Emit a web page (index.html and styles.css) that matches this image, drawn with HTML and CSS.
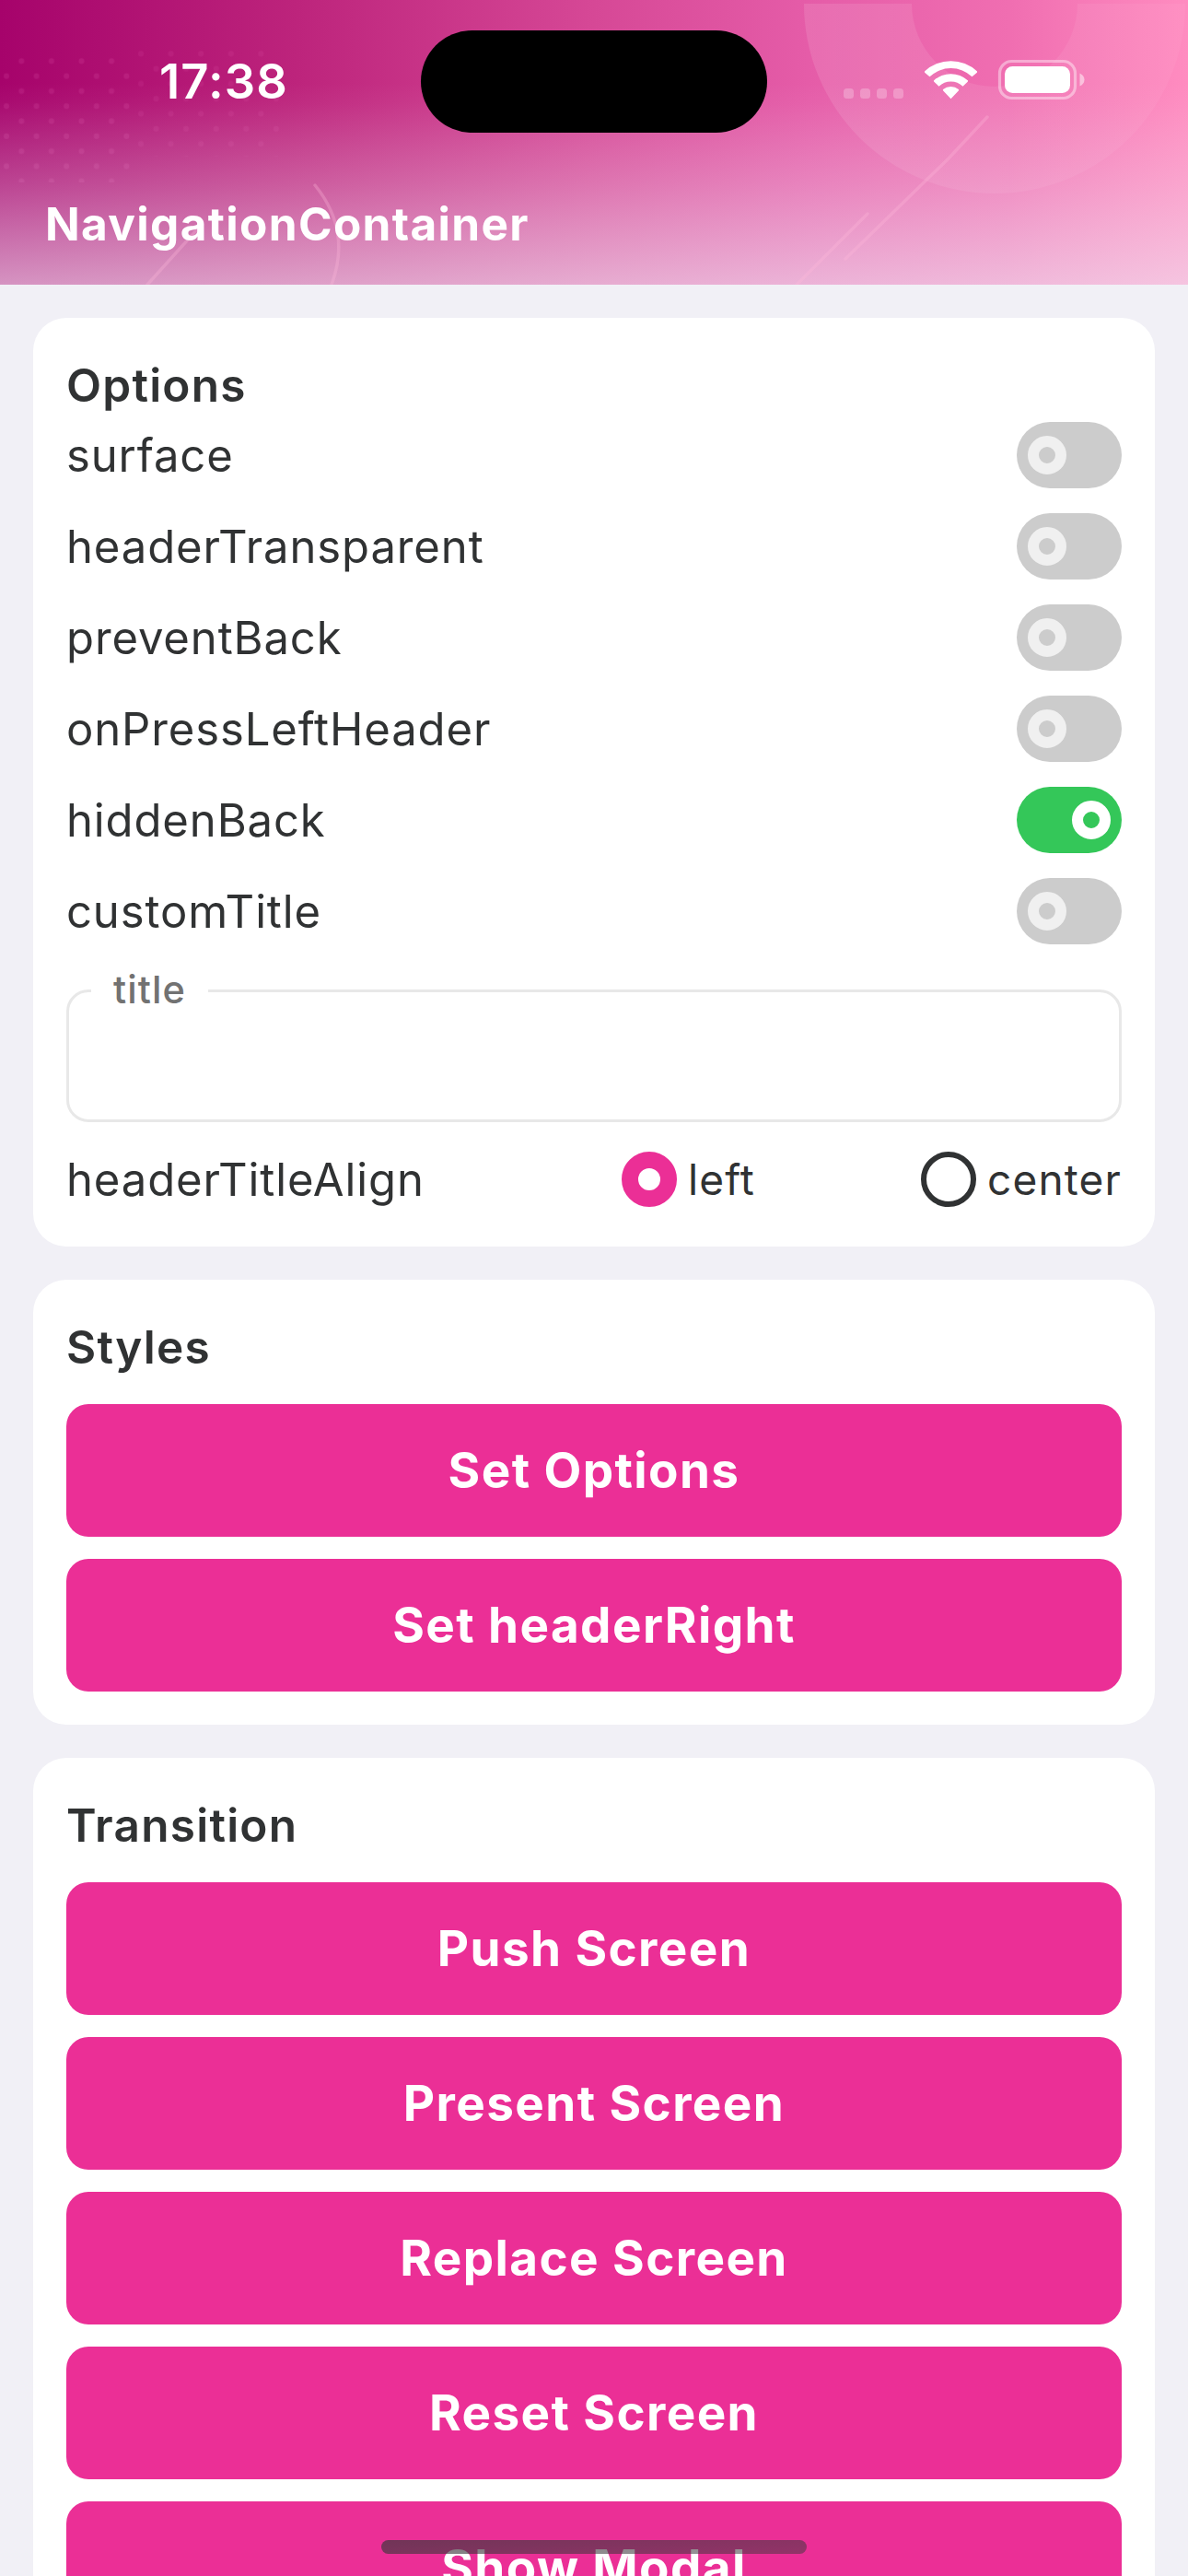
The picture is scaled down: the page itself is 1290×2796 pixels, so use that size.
FILE: index.html
```
<!DOCTYPE html>
<html lang="en">
<head>
<meta charset="utf-8">
<title>NavigationContainer</title>
<link rel="stylesheet" href="styles.css">
</head>
<body>
<div class="screen">
  <header class="header">
    <svg class="header-art" viewBox="0 0 1290 309" aria-hidden="true">
      <defs>
        <linearGradient id="base" x1="0" y1="0" x2="1" y2="0">
          <stop offset="0" stop-color="#a6036b"/>
          <stop offset="0.25" stop-color="#bd247c"/>
          <stop offset="0.5" stop-color="#d64896"/>
          <stop offset="0.68" stop-color="#e55ca8"/>
          <stop offset="0.85" stop-color="#f06eb1"/>
          <stop offset="1" stop-color="#ff8cc0"/>
        </linearGradient>
        <linearGradient id="fade" gradientUnits="userSpaceOnUse" x1="645" y1="90" x2="645" y2="309">
          <stop offset="0" stop-color="#f0e4f2" stop-opacity="0"/>
          <stop offset="0.1" stop-color="#f0e4f2" stop-opacity="0.04"/>
          <stop offset="0.5" stop-color="#f0e4f2" stop-opacity="0.29"/>
          <stop offset="1" stop-color="#f0e4f2" stop-opacity="0.64"/>
        </linearGradient>
        <linearGradient id="ring" x1="0" y1="0" x2="1" y2="0">
          <stop offset="0" stop-color="#fff" stop-opacity="0.11"/>
          <stop offset="1" stop-color="#fff" stop-opacity="0.04"/>
        </linearGradient>
        <pattern id="dotsA" patternUnits="userSpaceOnUse" x="-1" y="58" width="32.6" height="32.6">
          <g fill="#f070c0"><circle cx="24.3" cy="8.3" r="3"/><circle cx="8" cy="24.6" r="3"/></g>
        </pattern>
        <pattern id="dotsB" patternUnits="userSpaceOnUse" x="145" y="50" width="32.6" height="32.6">
          <g fill="#f070c0"><circle cx="8" cy="8.3" r="3"/><circle cx="24.5" cy="24.6" r="3"/></g>
        </pattern>
      </defs>
      <rect width="1290" height="309" fill="url(#base)"/>
      <path d="M873 4H990A90 90 0 0 0 1170 4H1287A207 206 0 0 1 873 4Z" fill="url(#ring)"/>
      <rect x="0" y="58" width="145" height="140" fill="url(#dotsA)" opacity="0.14"/>
      <rect x="145" y="50" width="160" height="120" fill="url(#dotsB)" opacity="0.1"/>
      <rect width="1290" height="309" fill="url(#fade)"/>
      <g fill="none" stroke="#ffb8da" stroke-opacity="0.3" stroke-width="3.5" stroke-linecap="round">
        <path d="M1072 127L1030 172L918 281M942 232L865 309M215 248L160 309M342 201Q382 250 360 309"/>
      </g>
    </svg>
    <div class="status-bar">
      <span class="time">17:38</span>
      <span class="island"></span>
      <svg class="status-icons" width="264" height="46" viewBox="914 64 264 46" fill="#fff" aria-hidden="true">
        <g fill-opacity="0.25">
          <rect x="916" y="96" width="11" height="11" rx="3.5"/><rect x="934" y="96" width="11" height="11" rx="3.5"/>
          <rect x="952" y="96" width="11" height="11" rx="3.5"/><rect x="970" y="96" width="11" height="11" rx="3.5"/>
        </g>
        <path d="M1004.2 77.3A41.5 41.5 0 0 1 1060.8 77.3Q1061.5 78.3 1060.6 79L1055.5 83.3A33.3 33.3 0 0 0 1009.5 83.3L1004.4 79Q1003.5 78.3 1004.2 77.3Z"/>
        <path d="M1014.2 87.3A27 27 0 0 1 1050.8 87.3Q1051.5 88 1050.7 88.7L1045.5 93.7A19 19 0 0 0 1019.5 93.7L1014.3 88.7Q1013.5 88 1014.2 87.3Z"/>
        <path d="M1024.1 97.1A13 13 0 0 1 1040.9 97.1Q1041.5 97.9 1040.8 98.6L1032.5 107.3L1024.2 98.6Q1023.5 97.9 1024.1 97.1Z"/>
        <rect x="1085.5" y="66.5" width="82" height="40" rx="13" fill="none" stroke="#fff" stroke-opacity="0.42" stroke-width="3.2"/>
        <rect x="1091" y="72" width="71" height="29" rx="8.5"/>
        <path d="M1172.5 79.5Q1177.5 82 1177.5 86.5T1172.5 93.5Z" fill-opacity="0.5"/>
      </svg>
    </div>
    <h1 class="header-title">NavigationContainer</h1>
  </header>

  <main class="content">
    <section class="card">
      <h2 class="card-title">Options</h2>
      <div class="toggles">
        <div class="row"><span>surface</span><i class="switch"></i></div>
        <div class="row"><span>headerTransparent</span><i class="switch"></i></div>
        <div class="row"><span>preventBack</span><i class="switch"></i></div>
        <div class="row"><span>onPressLeftHeader</span><i class="switch"></i></div>
        <div class="row"><span>hiddenBack</span><i class="switch on"></i></div>
        <div class="row"><span>customTitle</span><i class="switch"></i></div>
      </div>
      <div class="field"><label class="field-label">title</label></div>
      <div class="align-row">
        <span class="align-label">headerTitleAlign</span>
        <span class="choice"><i class="radio checked"></i><span>left</span></span>
        <span class="choice"><i class="radio"></i><span>center</span></span>
      </div>
    </section>

    <section class="card">
      <h2 class="card-title">Styles</h2>
      <div class="buttons">
        <div class="button">Set Options</div>
        <div class="button">Set headerRight</div>
      </div>
    </section>

    <section class="card">
      <h2 class="card-title">Transition</h2>
      <div class="buttons">
        <div class="button">Push Screen</div>
        <div class="button">Present Screen</div>
        <div class="button">Replace Screen</div>
        <div class="button">Reset Screen</div>
        <div class="button">Show Modal</div>
      </div>
    </section>
  </main>
  <div class="home-indicator"></div>
</div>
</body>
</html>
```
FILE: styles.css
```
*, *::before { box-sizing: border-box; }
body { margin: 0; background: #f1f0f6; }
.screen {
  position: relative;
  width: 1290px;
  height: 2796px;
  overflow: hidden;
  color: #303233;
  font-family: Inter, "Liberation Sans", sans-serif;
  font-size: 49px;
  letter-spacing: 0.88px;
}
.header { position: relative; height: 309px; }
.header-art { position: absolute; inset: 0; width: 1290px; height: 309px; }
.status-bar {
  position: relative;
  display: grid;
  grid-template-columns: 457px 376px 1fr;
  height: 210px;
}
.time {
  padding: 57px 0 0 173px;
  color: #fff;
  font-size: 52.5px;
  font-weight: 600;
  letter-spacing: 1.1px;
  line-height: 62px;
}
.island { height: 111px; margin-top: 33px; border-radius: 56px; background: #000; }
.status-icons { margin: 64px 0 0 81px; }
.header-title {
  position: relative;
  margin: 0;
  padding-left: 49px;
  color: #fff;
  font-size: 49.5px;
  font-weight: 700;
  letter-spacing: 1.35px;
  line-height: 66px;
}
.content { display: flex; flex-direction: column; gap: 36px; padding: 36px; }
.card { padding: 36px; border-radius: 36px; background: #fff; }
.card-title {
  margin: 0;
  font-size: 49.5px;
  font-weight: 600;
  letter-spacing: 1.25px;
  line-height: 75px;
}
.toggles { display: flex; flex-direction: column; gap: 27px; margin-top: 2px; }
.row { display: flex; align-items: center; justify-content: space-between; height: 72px; }
.switch { width: 114px; height: 72px; padding: 15px 12px; border-radius: 36px; background: #ccc; }
.switch::before {
  display: block;
  width: 42px;
  height: 42px;
  border: 12px solid #f0f0f0;
  border-radius: 50%;
  content: "";
}
.switch.on { background: #34c759; }
.switch.on::before { margin-left: auto; border-color: #fff; }
.field {
  position: relative;
  height: 144px;
  margin-top: 49px;
  border: 3px solid #e8e8e8;
  border-radius: 24px;
}
.field-label {
  position: absolute;
  top: -27px;
  left: 24px;
  padding: 0 24px;
  background: #fff;
  color: #727272;
  font-size: 41.5px;
  font-weight: 500;
  letter-spacing: 1.1px;
  line-height: 48px;
}
.align-row { display: flex; align-items: center; height: 60px; margin: 32px 0 7px; }
.align-label { width: 603px; }
.choice { display: flex; align-items: center; gap: 12px; font-size: 46px; letter-spacing: 1.15px; }
.choice + .choice { margin-left: auto; }
.radio { width: 60px; height: 60px; border: 6px solid #303233; border-radius: 50%; }
.radio.checked { border: 18px solid #eb2f96; }
.buttons { display: flex; flex-direction: column; gap: 24px; margin-top: 24px; }
.button {
  display: flex;
  align-items: center;
  justify-content: center;
  height: 144px;
  border-radius: 24px;
  background: #eb2f96;
  color: #fff;
  font-size: 53px;
  font-weight: 700;
  letter-spacing: 1.4px;
}
.home-indicator {
  position: absolute;
  left: 414px;
  top: 2757px;
  width: 462px;
  height: 15px;
  border-radius: 8px;
  background: linear-gradient(175deg, rgba(60, 55, 60, 0.7), rgba(60, 55, 60, 0.5));
}
```
